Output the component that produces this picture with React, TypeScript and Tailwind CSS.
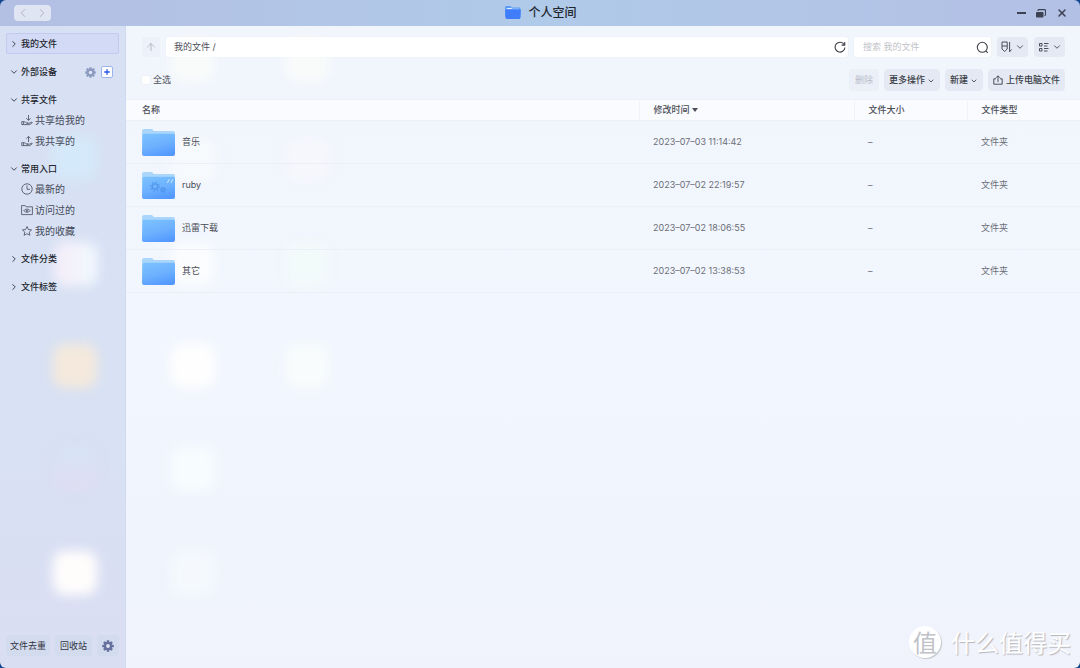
import { useId } from 'react'
import type { ReactNode } from 'react'
import { ArrowUp, ChevronDown, ChevronLeft, ChevronRight, Plus, X } from 'lucide-react'

interface Entrada {
  nombre: string
  fecha: string
  desarrollo?: boolean
}

const ARCHIVOS: Entrada[] = [
  { nombre: '音乐', fecha: '2023–07–03 11:14:42' },
  { nombre: 'ruby', fecha: '2023–07–02 22:19:57', desarrollo: true },
  { nombre: '迅雷下载', fecha: '2023–07–02 18:06:55' },
  { nombre: '其它', fecha: '2023–07–02 13:38:53' },
]

// Desktop icons glowing through the frosted window
const BRILLOS = [
  'left-[53px] top-[136px] bg-[#d3ebfb]/80',
  'left-[54px] top-[242px] bg-linear-to-r from-[#f6edf8] to-[#f0f9ff]',
  'left-[53px] top-[344px] bg-[#f4e9dc]',
  'left-[53px] top-[447px] bg-linear-to-b from-[#d5e4f5] to-[#e0dcf1]',
  'left-[53px] top-[551px] bg-[#fffdfc]',
  'left-[171px] top-[38px] bg-[#fbfcfa]/80',
  'left-[285px] top-[38px] bg-[#fbfcfa]/80',
  'left-[171px] top-[138px] bg-[#f9fbfd]/80',
  'left-[285px] top-[138px] bg-[#f7f7fb]/80',
  'left-[171px] top-[242px] bg-[#fcfdfe]/90',
  'left-[285px] top-[242px] bg-[#f2fbf9]/90',
  'left-[171px] top-[344px] bg-[#fefefe]',
  'left-[285px] top-[344px] bg-[#f8fcfc]',
  'left-[171px] top-[447px] bg-[#f7fcfe]',
  'left-[171px] top-[551px] bg-[#f5f9fd]/90',
]

function Engranaje({ className }: { className?: string }) {
  return (
    <svg viewBox="0 0 24 24" className={className} aria-hidden="true">
      <g fill="currentColor">
        {[0, 45, 90, 135].map((a) => (
          <rect key={a} x="9.5" y="0.5" width="5" height="23" rx="1" transform={`rotate(${a} 12 12)`} />
        ))}
      </g>
      <circle cx="12" cy="12" r="6" fill="none" stroke="currentColor" strokeWidth="5" />
      <circle cx="12" cy="12" r="3.8" fill="#dfe5f4" />
    </svg>
  )
}

function Compartir({ recibido }: { recibido?: boolean }) {
  return (
    <svg viewBox="0 0 12 12" className="size-3" fill="none" stroke="currentColor" strokeWidth="0.8" aria-hidden="true">
      <path d={recibido ? 'M7.500 1v5.200M5.300 4.200l2.200 2.200 2.200-2.200' : 'M7.500 7V1.400M5.300 3.600l2.200-2.200 2.200 2.200'} />
      <path d="M.8 7.600h1.800v3H.8z" />
      <path d="M2.600 8c1.400-.4 2 .3 2.800.9h1.800M2.600 10.600h6.200l2.300-1.700c.5-.5-.1-1-.8-.6L8.300 9.200H5.600" />
    </svg>
  )
}

function Reloj() {
  return (
    <svg viewBox="0 0 12 12" className="size-3" fill="none" stroke="currentColor" strokeWidth="0.8" aria-hidden="true">
      <circle cx="6" cy="6" r="5.200" />
      <path d="M6 2.500V6.300H9" />
    </svg>
  )
}

function Visitado() {
  return (
    <svg viewBox="0 0 12 12" className="size-3" fill="none" stroke="currentColor" strokeWidth="0.8" aria-hidden="true">
      <path d="M.6 10.600V1.600h3.600l1 1.200h6.200v7.800z" />
      <path d="M2.800 6.700C4.500 4.600 7.500 4.600 9.200 6.700 7.500 8.800 4.500 8.800 2.800 6.700z" />
      <circle cx="6" cy="6.700" r="0.800" />
    </svg>
  )
}

function Estrella() {
  return (
    <svg viewBox="0 0 12 12" className="size-3" fill="none" stroke="currentColor" strokeWidth="0.8" strokeLinejoin="round" aria-hidden="true">
      <path d="M6 1.500l1.400 3 3.200.4-2.400 2.200.7 3.200L6 8.700l-2.900 1.600.7-3.200L1.400 4.900l3.200-.4z" />
    </svg>
  )
}

function Carpeta({ desarrollo }: { desarrollo?: boolean }) {
  const id = useId()
  return (
    <svg viewBox="0 0 33 27" className="h-[27px] w-[33px] shrink-0" aria-hidden="true">
      <defs>
        <linearGradient id={id} x1="0.300" y1="0" x2="0.700" y2="1">
          <stop offset="0" stopColor="#7ac0ff" />
          <stop offset="0.500" stopColor="#6db1ff" />
          <stop offset="1" stopColor="#5298ff" />
        </linearGradient>
      </defs>
      <path d="M0 2a2 2 0 0 1 2-2h7.500c1.200 0 1.600 2 3 2H31a2 2 0 0 1 2 2v20H0z" fill="#aad6fb" />
      <path d="M.5 6.500a1.800 1.800 0 0 1 1.800-1.800h28.900A1.800 1.800 0 0 1 33 6.500V25a2 2 0 0 1-2 2H2a2 2 0 0 1-2-2z" fill={`url(#${id})`} />
      {desarrollo && (
        <g fill="none" stroke="#4a92ea" opacity="0.75">
          <circle cx="13" cy="14.500" r="2.800" strokeWidth="1.600" />
          <circle cx="13" cy="14.500" r="4.400" strokeWidth="1.500" strokeDasharray="1.300 2.150" />
          <circle cx="21" cy="18" r="1.600" strokeWidth="1.600" />
          <circle cx="21" cy="18" r="2.700" strokeWidth="0.900" strokeDasharray="1.100 1" />
          <path d="M25.300 11l2-3.800M28.800 11l2-3.800" stroke="#e3f1ff" strokeWidth="1.100" />
        </g>
      )}
    </svg>
  )
}

function Seccion({ titulo, abierta, children }: { titulo: string; abierta?: boolean; children?: ReactNode }) {
  const Flecha = abierta ? ChevronDown : ChevronRight
  return (
    <section>
      <button type="button" aria-expanded={!!abierta} className="flex h-5 items-center gap-0.5 pl-[3px] font-medium text-[#24272f]">
        <Flecha className="size-2.5" strokeWidth={2} />
        {titulo}
      </button>
      {children && <ul className="flex flex-col gap-px">{children}</ul>}
    </section>
  )
}

function Enlace({ icono, texto }: { icono: ReactNode; texto: string }) {
  return (
    <li>
      <a href="#" className="flex h-5 items-center gap-0.5 pl-[15px] text-[10px] text-[#454a58]">
        {icono}
        {texto}
      </a>
    </li>
  )
}

const BOTON = 'flex items-center justify-center rounded bg-[#e4e9f4] text-[#3b3e47]'
const BOTON_PIE = 'h-[21px] rounded bg-[#d3dbee] whitespace-nowrap'

export default function App() {
  return (
    <div className="h-screen bg-[#10458f] font-['Inter','Noto_Sans_CJK_SC',sans-serif] text-[9px] text-[#4b4e57]">
      <div className="relative isolate flex h-full flex-col overflow-hidden rounded-md">
        <header className="grid h-[26px] shrink-0 grid-cols-[1fr_auto_1fr] items-center bg-linear-to-r from-[#b3bfe3] via-[#b0cae9] to-[#b3c0e5] pr-3 pl-3.5">
          <div className="flex h-4 w-[37px] items-center justify-around rounded bg-[#dfe5f3] text-[#a9adbb]">
            <button type="button" aria-label="后退"><ChevronLeft className="size-3.5" strokeWidth={1.5} /></button>
            <button type="button" aria-label="前进"><ChevronRight className="size-3.5" strokeWidth={1.5} /></button>
          </div>
          <h1 className="flex items-center gap-[7px] text-xs font-medium text-[#22262f]">
            <svg viewBox="0 0 16 14" className="h-3.5 w-4" aria-hidden="true">
              <path d="M0 1.500A1.500 1.500 0 0 1 1.500 0h4l1.500 1.500h7A1.500 1.500 0 0 1 15.500 3v8H0z" fill="#5b9bf5" />
              <path d="M1.500 2.300L6 1.800l1 1h7l.5.7h-13z" fill="#eaf3ff" />
              <path d="M.3 4.500A1.200 1.200 0 0 1 1.500 3.300h13A1.200 1.200 0 0 1 15.800 4.500l-.4 7.400A1.300 1.300 0 0 1 14.100 13H1.900A1.300 1.300 0 0 1 .6 11.900z" fill="#3f7dfb" />
            </svg>
            个人空间
          </h1>
          <div className="flex items-center justify-end gap-2.5 text-[#3c4252]">
            <button type="button" aria-label="最小化" className="h-0.5 w-[9px] bg-current" />
            <button type="button" aria-label="还原">
              <svg viewBox="0 0 10 9" className="h-[9px] w-2.5" aria-hidden="true">
                <rect x="0" y="3" width="7.500" height="5.500" rx="1" fill="currentColor" />
                <path d="M2 2V1.500A1 1 0 0 1 3 .6h5.500a1 1 0 0 1 1 1v4a1 1 0 0 1-1 1" fill="none" stroke="currentColor" strokeWidth="1.100" />
              </svg>
            </button>
            <button type="button" aria-label="关闭"><X className="size-3" strokeWidth={3} /></button>
          </div>
        </header>

        <div className="flex min-h-0 flex-1">
          <aside className="flex w-[126px] shrink-0 flex-col justify-between border-r border-[#d0daf0] bg-linear-to-b from-[#d8e0f4] via-[#d8e2f4] to-[#dadef3] px-1.5 pt-[7px] pb-3">
            <nav className="relative z-10 flex flex-col gap-2">
              <a href="#" className="flex h-[21px] items-center gap-0.5 rounded-xs border border-[#c1cbf0] bg-[#d2daf6] pl-0.5 font-medium text-[#24272f]">
                <ChevronRight className="size-2.5" />
                我的文件
              </a>
              <div className="flex items-center">
                <Seccion titulo="外部设备" abierta />
                <div className="ml-auto flex items-center gap-[5px] pr-1.5">
                  <button type="button" aria-label="设备设置" className="text-[#8c9ac0]"><Engranaje className="size-[11px]" /></button>
                  <button type="button" aria-label="添加设备" className="flex size-3 items-center justify-center rounded-xs border border-[#9db2f2] bg-white text-[#2c57e8]">
                    <Plus className="size-2" strokeWidth={4} />
                  </button>
                </div>
              </div>
              <Seccion titulo="共享文件" abierta>
                <Enlace icono={<Compartir recibido />} texto="共享给我的" />
                <Enlace icono={<Compartir />} texto="我共享的" />
              </Seccion>
              <Seccion titulo="常用入口" abierta>
                <Enlace icono={<Reloj />} texto="最新的" />
                <Enlace icono={<Visitado />} texto="访问过的" />
                <Enlace icono={<Estrella />} texto="我的收藏" />
              </Seccion>
              <Seccion titulo="文件分类" />
              <Seccion titulo="文件标签" />
            </nav>
            <div className="relative z-10 flex gap-[5px] text-[#30343d]">
              <button type="button" className={`${BOTON_PIE} px-1`}>文件去重</button>
              <button type="button" className={`${BOTON_PIE} px-[5px]`}>回收站</button>
              <button type="button" aria-label="设置" className={`${BOTON_PIE} flex w-[22px] items-center justify-center text-[#65709c]`}>
                <Engranaje className="size-3" />
              </button>
            </div>
          </aside>

          <main className="flex min-w-0 flex-1 flex-col bg-linear-to-b from-[#f1f5fc] via-[#f2f6fe] to-[#f0f3fc]">
            <div className="relative z-10 flex flex-col gap-3 pt-[11px] pr-[15px] pb-2 pl-4">
              <div className="flex h-5 gap-1.5">
                <button type="button" aria-label="上一级" className="flex w-[18px] items-center justify-center rounded-xs bg-[#edf1fa] text-[#a4a8b3]">
                  <ArrowUp className="size-3" strokeWidth={1.5} />
                </button>
                <div className="flex flex-1 items-center rounded-xs bg-white pr-0.5 pl-2 shadow-[0_0_1px_#d5dae5]">
                  <input aria-label="路径" defaultValue="我的文件 /" className="min-w-0 flex-1 bg-transparent text-[#4b4e57] outline-none" />
                  <button type="button" aria-label="刷新" className="text-[#3c3f48]">
                    <svg viewBox="0 0 12 12" className="size-3" fill="none" stroke="currentColor" strokeWidth="1.100" aria-hidden="true">
                      <path d="M10.200 3.600A4.900 4.900 0 1 0 10.900 6.500" />
                      <path d="M10.700 1v3.100H7.600" />
                    </svg>
                  </button>
                </div>
                <div className="flex w-[137px] items-center rounded-xs bg-white pr-0.5 pl-[9px] shadow-[0_0_1px_#d5dae5]">
                  <input type="search" aria-label="搜索" placeholder="搜索 我的文件" className="min-w-0 flex-1 bg-transparent outline-none placeholder:text-[#c1c3c9]" />
                  <button type="button" aria-label="搜索文件" className="text-[#3c3f48]">
                    <svg viewBox="0 0 13 13" className="size-[13px]" fill="none" stroke="currentColor" strokeWidth="1.100" aria-hidden="true">
                      <circle cx="6.300" cy="6.300" r="5" />
                      <path d="M9.800 9.800l2 2" />
                    </svg>
                  </button>
                </div>
                <button type="button" aria-label="排序" aria-haspopup="menu" className={`${BOTON} w-[31px] gap-0.5`}>
                  <svg viewBox="0 0 12 12" className="size-3" fill="none" stroke="currentColor" strokeWidth="0.900" aria-hidden="true">
                    <path d="M1 1h5.200v7L3.600 10.500 1 8zM1 5h5.200M8.600 1v9.800l2-2.300" />
                  </svg>
                  <ChevronDown className="size-2.5" />
                </button>
                <button type="button" aria-label="视图" aria-haspopup="menu" className={`${BOTON} w-[31px] gap-0.5`}>
                  <svg viewBox="0 0 12 12" className="size-3" fill="none" stroke="currentColor" strokeWidth="0.900" aria-hidden="true">
                    <path d="M1.500 2.500H4V5H1.500zM1.500 7.500H4V10H1.500zM6 2.500h4.500M6 5h3.500M6 7.500h4.500M6 10h3.500" />
                  </svg>
                  <ChevronDown className="size-2.5" />
                </button>
              </div>
              <div className="flex h-[22px] items-center gap-[5px]">
                <label className="mr-auto flex items-center gap-[3px]">
                  <input type="checkbox" className="size-2 appearance-none rounded-[1px] bg-white shadow-[0_0_1px_#c8cedb]" />
                  全选
                </label>
                <button type="button" disabled className="h-full rounded bg-[#ebeff8] px-1.5 text-[#b9bdc8]">删除</button>
                <button type="button" aria-haspopup="menu" className={`${BOTON} h-full gap-0.5 px-[5px] font-medium`}>
                  更多操作 <ChevronDown className="mt-0.5 size-2" strokeWidth={2.5} />
                </button>
                <button type="button" aria-haspopup="menu" className={`${BOTON} h-full gap-0.5 px-[5px] font-medium`}>
                  新建 <ChevronDown className="mt-0.5 size-2" strokeWidth={2.5} />
                </button>
                <button type="button" className={`${BOTON} h-full gap-[3px] px-[5px] font-medium`}>
                  <svg viewBox="0 0 10 10" className="size-2.5" fill="none" stroke="currentColor" strokeWidth="0.900" aria-hidden="true">
                    <path d="M3 3.800H.8v5.400h8.400V3.800H7M5 7V1M3 2.800l2-2 2 2" />
                  </svg>
                  上传电脑文件
                </button>
              </div>
            </div>

            <table className="relative z-10 w-full table-fixed text-left">
              <colgroup>
                <col />
                <col className="w-[215px]" />
                <col className="w-[113px]" />
                <col className="w-[113px]" />
              </colgroup>
              <thead className="bg-[#fafbfe]">
                <tr className="h-[21px] border-y border-[#ebeff7] [&>th]:py-0 [&>th]:font-medium [&>th+th]:border-l [&>th+th]:border-[#eff2f8] [&>th+th]:pl-3.5">
                  <th scope="col" className="pl-4">名称</th>
                  <th scope="col">
                    <span className="flex items-center gap-0.5">
                      修改时间
                      <svg viewBox="0 0 6 4" className="h-1 w-1.5" aria-hidden="true"><path d="M0 0h6L3 4z" fill="currentColor" /></svg>
                    </span>
                  </th>
                  <th scope="col">文件大小</th>
                  <th scope="col">文件类型</th>
                </tr>
              </thead>
              <tbody className="text-[#6b6e77]">
                {ARCHIVOS.map((a) => (
                  <tr key={a.nombre} className="h-[43px] border-b border-[#ebeff7] [&>td]:py-0 [&>td+td]:pl-3.5">
                    <td className="pl-4">
                      <a href="#" className="flex items-center gap-[7px] text-[#484b54]">
                        <Carpeta desarrollo={a.desarrollo} />
                        {a.nombre}
                      </a>
                    </td>
                    <td>{a.fecha}</td>
                    <td>–</td>
                    <td>文件夹</td>
                  </tr>
                ))}
              </tbody>
            </table>
          </main>
        </div>

        <div className="pointer-events-none absolute inset-x-0 top-[26px] bottom-0 overflow-hidden" aria-hidden="true">
          <div className="absolute inset-x-0 -top-[26px]">
            {BRILLOS.map((b) => (
              <div key={b} className={`absolute size-11 rounded-xl blur-[6px] ${b}`} />
            ))}
          </div>
        </div>

        <div className="absolute right-[9px] bottom-2.5 z-10 flex items-center gap-2.5 font-['Noto_Sans_CJK_SC',sans-serif] text-2xl leading-8 text-white">
          <span className="flex size-8 items-center justify-center rounded-full bg-white text-[#c0c2c9] shadow-[1px_1px_1px_#c4c6cc]">
            值
          </span>
          <span className="[text-shadow:1px_1px_1px_#b4b6bc]">什么值得买</span>
        </div>
      </div>
    </div>
  )
}
